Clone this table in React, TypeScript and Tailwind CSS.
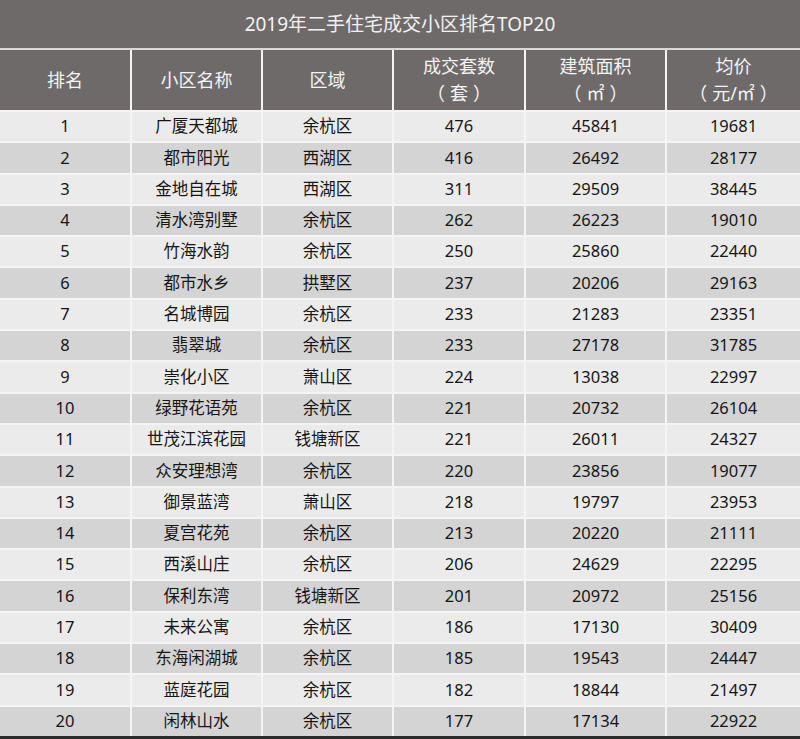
import React from "react";

const rows: [number, string, string, number, number, number][] = [
  [1, "广厦天都城", "余杭区", 476, 45841, 19681],
  [2, "都市阳光", "西湖区", 416, 26492, 28177],
  [3, "金地自在城", "西湖区", 311, 29509, 38445],
  [4, "清水湾别墅", "余杭区", 262, 26223, 19010],
  [5, "竹海水韵", "余杭区", 250, 25860, 22440],
  [6, "都市水乡", "拱墅区", 237, 20206, 29163],
  [7, "名城博园", "余杭区", 233, 21283, 23351],
  [8, "翡翠城", "余杭区", 233, 27178, 31785],
  [9, "崇化小区", "萧山区", 224, 13038, 22997],
  [10, "绿野花语苑", "余杭区", 221, 20732, 26104],
  [11, "世茂江滨花园", "钱塘新区", 221, 26011, 24327],
  [12, "众安理想湾", "余杭区", 220, 23856, 19077],
  [13, "御景蓝湾", "萧山区", 218, 19797, 23953],
  [14, "夏宫花苑", "余杭区", 213, 20220, 21111],
  [15, "西溪山庄", "余杭区", 206, 24629, 22295],
  [16, "保利东湾", "钱塘新区", 201, 20972, 25156],
  [17, "未来公寓", "余杭区", 186, 17130, 30409],
  [18, "东海闲湖城", "余杭区", 185, 19543, 24447],
  [19, "蓝庭花园", "余杭区", 182, 18844, 21497],
  [20, "闲林山水", "余杭区", 177, 17134, 22922],
];

const cols = "grid grid-cols-[130px_129px_129px_130px_139px_133px] gap-x-[2px]";

function Unit({ children }: { children: React.ReactNode }) {
  return (
    <span className="flex items-center">
      <span className="mr-[5px]">（</span>
      <span>{children}</span>
      <span className="ml-[5px]">）</span>
    </span>
  );
}

export default function App() {
  return (
    <div
      className="w-[800px] h-[739px] bg-[#f4f4f4] flex flex-col overflow-hidden"
      style={{ fontFamily: '"Noto Sans", "Noto Sans CJK SC", sans-serif' }}
    >
      <div className="h-[48px] bg-[#6e6a69] flex items-center justify-center text-[19px] text-[#f2f2f2]">
        2019年二手住宅成交小区排名TOP20
      </div>
      <div className="h-[2px] bg-[#d9d9d9]" />
      <div className={`${cols} h-[60px] text-[18px] text-[#f4f4f4]`}>
        <div className="bg-[#6e6a69] flex items-center justify-center">排名</div>
        <div className="bg-[#6e6a69] flex items-center justify-center">小区名称</div>
        <div className="bg-[#6e6a69] flex items-center justify-center">区域</div>
        <div className="bg-[#6e6a69] flex flex-col items-center justify-center leading-[27px]">
          <span>成交套数</span>
          <Unit>套</Unit>
        </div>
        <div className="bg-[#6e6a69] flex flex-col items-center justify-center leading-[27px]">
          <span>建筑面积</span>
          <Unit>㎡</Unit>
        </div>
        <div className="bg-[#6e6a69] flex flex-col items-center justify-center leading-[27px]">
          <span>均价</span>
          <Unit>元/㎡</Unit>
        </div>
      </div>
      <div className="h-[2px]" />
      <div className="flex flex-col gap-y-[2px]">
        {rows.map((r, i) => {
          const bg = i % 2 === 0 ? "bg-[#ebebeb]" : "bg-[#d4d4d4]";
          return (
            <div key={r[0]} className={`${cols} h-[29.3px] text-[16.5px] text-[#161616]`}>
              {r.map((v, j) => (
                <div key={j} className={`${bg} flex items-center justify-center`}>
                  {v}
                </div>
              ))}
            </div>
          );
        })}
      </div>
      <div className="h-[3px] bg-[#2b2b2b]" />
    </div>
  );
}
